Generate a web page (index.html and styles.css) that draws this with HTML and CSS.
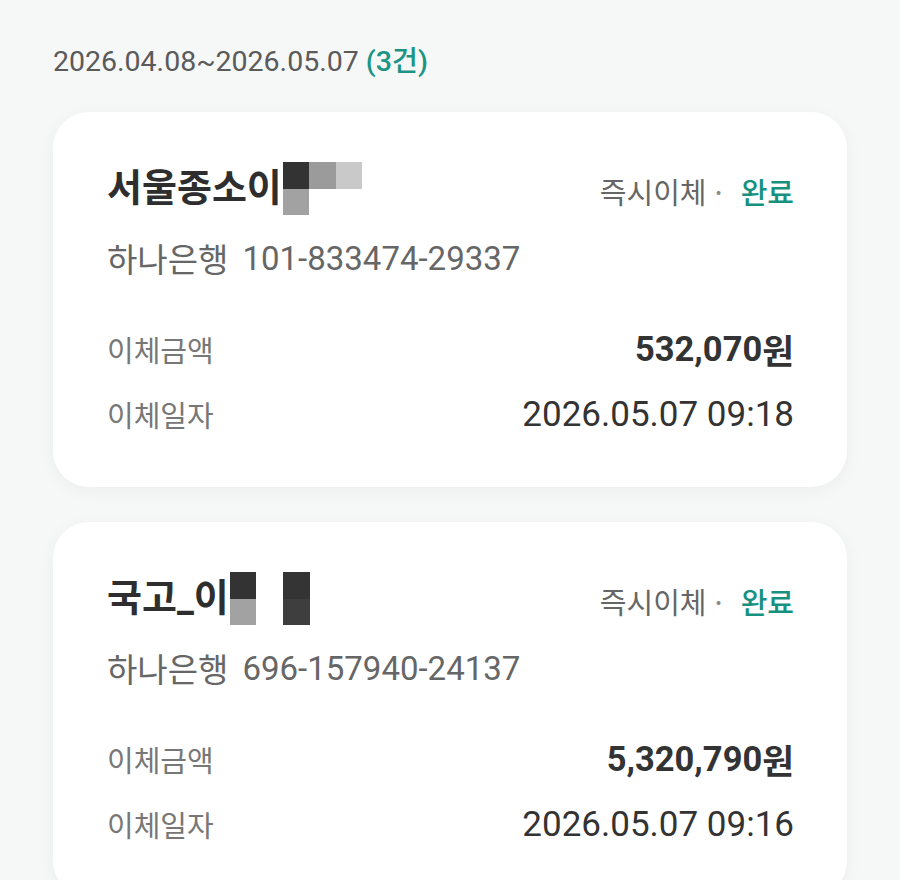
FILE: index.html
```html
<!DOCTYPE html>
<html lang="ko">
<head>
<meta charset="utf-8">
<title>이체내역</title>
<link rel="stylesheet" href="styles.css">
</head>
<body>
<main class="page">
  <div class="period">2026.04.08~2026.05.07 <span class="count">(3건)</span></div>

  <section class="card">
    <div class="card-head">
      <div class="name">
        <span class="name-text">서울종소이</span>
        <span class="mosaic m1">
          <i class="px c1"></i><i class="px c2"></i><i class="px c3"></i>
          <i class="px c4"></i><i class="px"></i><i class="px"></i>
        </span>
      </div>
      <div class="status"><span class="kind">즉시이체</span><span class="dot">·</span><span class="done">완료</span></div>
    </div>
    <div class="account"><span class="bank">하나은행</span><span class="acct-no">101-833474-29337</span></div>
    <div class="row row-amount">
      <span class="label">이체금액</span>
      <span class="amount">532,070<span class="won">원</span></span>
    </div>
    <div class="row row-date">
      <span class="label">이체일자</span>
      <span class="date">2026.05.07 09:18</span>
    </div>
  </section>

  <section class="card">
    <div class="card-head">
      <div class="name">
        <span class="name-text">국고_이</span>
        <span class="mosaic m2">
          <i class="px c1"></i><i class="px"></i><i class="px c5"></i>
          <i class="px c4"></i><i class="px"></i><i class="px c6"></i>
        </span>
      </div>
      <div class="status"><span class="kind">즉시이체</span><span class="dot">·</span><span class="done">완료</span></div>
    </div>
    <div class="account"><span class="bank">하나은행</span><span class="acct-no">696-157940-24137</span></div>
    <div class="row row-amount">
      <span class="label">이체금액</span>
      <span class="amount">5,320,790<span class="won">원</span></span>
    </div>
    <div class="row row-date">
      <span class="label">이체일자</span>
      <span class="date">2026.05.07 09:16</span>
    </div>
  </section>
</main>
</body>
</html>
```

FILE: styles.css
```css
* { box-sizing: border-box; }

html, body {
  margin: 0;
  padding: 0;
  background: #f6f7f7;
}

body {
  font-family: Roboto, "Noto Sans CJK KR", "Noto Sans", sans-serif;
  color: #333;
}

.page {
  padding: 45px 53px 0;
  display: flex;
  flex-direction: column;
}

.period {
  font-size: 28.5px;
  line-height: 34px;
  color: #5a5a5a;
  margin-bottom: 33px;
}

.count {
  color: #1a9585;
  font-weight: 500;
}

.card {
  background: #fff;
  border-radius: 36px;
  box-shadow: 0 4px 18px rgba(0, 0, 0, 0.045);
  padding: 50px 53px 51px 54px;
  margin-bottom: 35px;
  display: flex;
  flex-direction: column;
}

.card-head {
  height: 53px;
  display: flex;
  align-items: center;
  justify-content: space-between;
}

.name {
  display: flex;
  align-items: center;
}

.name-text {
  font-family: Roboto, "Noto Sans CJK KR", sans-serif;
  font-size: 38px;
  font-weight: 700;
  color: #2e2e2e;
  line-height: 53px;
}

.mosaic {
  display: grid;
  grid-template-columns: repeat(3, 26.5px);
  grid-template-rows: repeat(2, 26.5px);
  margin-left: 1px;
}

.px { display: block; }
.c1 { background: #333; }
.c2 { background: #9b9b9b; }
.c3 { background: #c9c9c9; }
.c4 { background: #a2a2a2; }
.c5 { background: #343434; }
.c6 { background: #3e3e3e; }

.m2 { grid-template-columns: 26.5px 27px 26.5px; }

.status {
  display: flex;
  align-items: center;
  font-family: "Noto Sans CJK KR", sans-serif;
  font-size: 29px;
  line-height: 40px;
  margin-top: 4px;
}

.kind { color: #666; }

.dot {
  color: #8a8a8a;
  margin: 0 18px 0 8px;
}

.done {
  color: #16907f;
  font-weight: 500;
}

.account {
  margin-top: 23px;
  height: 40px;
  display: flex;
  align-items: center;
  color: #666;
}

.bank {
  font-family: "Noto Sans CJK KR", sans-serif;
  font-size: 33px;
  margin-right: 14px;
}

.acct-no {
  font-size: 33px;
}

.row {
  height: 44px;
  display: flex;
  align-items: center;
  justify-content: space-between;
}

.row-amount { margin-top: 49px; }
.row-date { margin-top: 21px; }

.label {
  font-family: "Noto Sans CJK KR", sans-serif;
  font-size: 29px;
  color: #777;
}

.amount {
  font-size: 34.5px;
  font-weight: 700;
  color: #333;
  display: flex;
  align-items: center;
}

.won {
  font-family: "Noto Sans CJK KR", sans-serif;
  font-weight: 700;
}

.date {
  font-size: 35px;
  color: #333;
}
```
